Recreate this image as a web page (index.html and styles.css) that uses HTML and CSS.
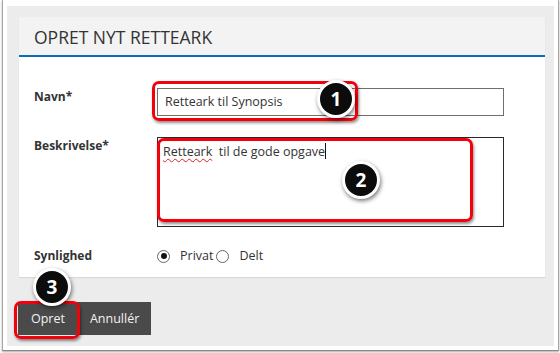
FILE: index.html
```html
<!DOCTYPE html>
<html lang="da">
<head>
<meta charset="utf-8">
<title>Opret nyt retteark</title>
<link rel="stylesheet" href="styles.css">
</head>
<body>
<div class="page">
  <div class="frame">
    <div class="stage">
      <section class="card">
        <header class="card-head">OPRET NYT RETTEARK</header>
        <div class="card-body">
          <div class="row">
            <label class="lbl">Navn*</label>
            <div class="input">Retteark til Synopsis</div>
          </div>
          <div class="row">
            <label class="lbl">Beskrivelse*</label>
            <div class="textarea"><span class="misspelled">Retteark</span>&nbsp; til de gode opgave<span class="caret"></span></div>
          </div>
          <div class="row row-center">
            <label class="lbl">Synlighed</label>
            <div class="radios">
              <span class="radio checked"></span><span class="opt">Privat</span>
              <span class="radio"></span><span class="opt">Delt</span>
            </div>
          </div>
        </div>
      </section>
      <div class="actions">
        <button class="btn">Opret</button><button class="btn">Annullér</button>
      </div>
    </div>
  </div>

  <div class="hl hl-1"></div>
  <div class="hl hl-2"></div>
  <div class="hl hl-3"></div>
  <div class="badge badge-1">1</div>
  <div class="badge badge-2">2</div>
  <div class="badge badge-3">3</div>
</div>
</body>
</html>
```
FILE: styles.css
```css
* { box-sizing: border-box; }
html, body { margin: 0; padding: 0; background: #fff; }
body {
  width: 560px;
  height: 353px;
  overflow: hidden;
  font-family: "Open Sans", "Noto Sans", sans-serif;
  color: #333;
}
.page { position: relative; width: 560px; height: 353px; }

.frame {
  margin-left: 2px;
  width: 557px;
  height: 351px;
  padding: 6px 4px 4px 4px;
  border-left: 1px solid #a8a8a8;
  border-right: 1px solid #a8a8a8;
  border-bottom: 1px solid #8a8a8a;
  box-shadow: 0 1px 2px rgba(0,0,0,0.35);
  background: #fff;
}
.stage {
  height: 340px;
  background: #ececec;
  padding: 11px 9px 0 12px;
}
.card {
  background: #fff;
  box-shadow: 0 1px 1px rgba(0,0,0,0.08);
}
.card-head {
  height: 40px;
  background: #f3f3f3;
  border-bottom: 2px solid #0b6db6;
  padding: 2px 0 0 15px;
  display: flex;
  align-items: center;
  font-size: 17.5px;
  color: #333;
}
.card-body {
  padding: 31px 41px 11px 15px;
  display: flex;
  flex-direction: column;
  gap: 21px;
}
.row {
  display: grid;
  grid-template-columns: 123px 1fr;
  align-items: start;
}
.row-center { align-items: center; margin-top: -2px; }
.lbl {
  font-size: 12px;
  font-weight: 700;
  line-height: 18px;
  color: #333;
}
.input {
  height: 28px;
  border: 1px solid #6e6e6e;
  padding: 0 7px;
  font-size: 12.5px;
  line-height: 26px;
  color: #333;
}
.textarea {
  height: 90px;
  border: 1px solid #2a2a2a;
  padding: 5px 5px;
  font-size: 12.5px;
  line-height: 18px;
  color: #333;
}
.misspelled {
  text-decoration: underline wavy #e02020;
  text-decoration-thickness: 1px;
  text-underline-offset: 2px;
  text-decoration-skip-ink: none;
}
.caret {
  display: inline-block;
  width: 1px;
  height: 16px;
  background: #111;
  vertical-align: -3px;
}
.radios {
  display: flex;
  align-items: center;
  font-size: 12.5px;
  line-height: 20px;
  color: #333;
}
.radio {
  width: 13px;
  height: 13px;
  border: 1px solid #666;
  border-radius: 50%;
  background: #fff;
  display: flex;
  align-items: center;
  justify-content: center;
  margin-right: 10px;
}
.radio.checked::after {
  content: "";
  width: 6px;
  height: 6px;
  border-radius: 50%;
  background: #111;
}
.opt { margin-right: 3px; }

.actions {
  margin-top: 25px;
  margin-left: -1px;
  display: flex;
}
.btn {
  height: 33px;
  border: 0;
  background: #4a4a4a;
  color: #f2f2f2;
  font-family: "Open Sans", "Noto Sans", sans-serif;
  font-size: 12.5px;
  padding: 0 13px;
}
.btn + .btn { padding: 0 12px; }

/* annotation overlay */
.hl {
  position: absolute;
  border: 3px solid #f2000c;
  border-radius: 7px;
  box-shadow: 1px 2px 3px rgba(0,0,0,0.45);
}
.hl-1 { left: 152px; top: 81px; width: 206px; height: 40px; }
.hl-2 { left: 157px; top: 138px; width: 316px; height: 84px; }
.hl-3 { left: 14px; top: 301px; width: 66px; height: 38px; }

.badge {
  position: absolute;
  width: 38px;
  height: 38px;
  border-radius: 50%;
  background: #0c0c0c;
  border: 3px solid #fff;
  box-shadow: 1px 2px 4px rgba(0,0,0,0.55);
  color: #fff;
  font-family: "Open Sans", "Noto Sans", sans-serif;
  font-weight: 700;
  font-size: 19px;
  display: flex;
  align-items: center;
  justify-content: center;
}
.badge-1 { left: 317px; top: 80px; }
.badge-2 { left: 342px; top: 161px; }
.badge-3 { left: 33px; top: 268px; }
```
